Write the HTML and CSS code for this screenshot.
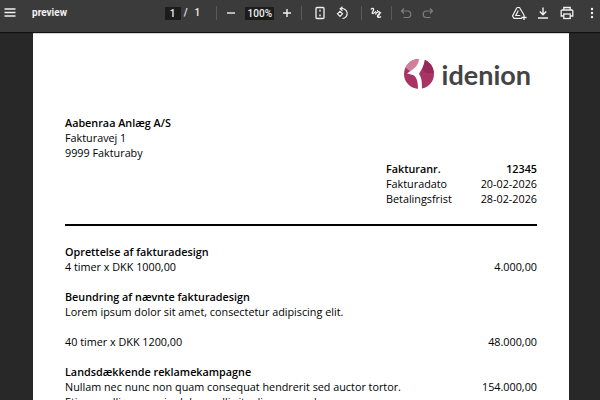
FILE: index.html
```html
<!DOCTYPE html>
<html lang="da">
<head>
<meta charset="utf-8">
<title>preview</title>
<link rel="stylesheet" href="styles.css">
</head>
<body>
<header class="toolbar">
  <div class="tb-left">
    <svg class="ic" viewBox="0 0 14 14"><path d="M1.5 3h11M1.5 6.500h11M1.500 10h11" stroke="#f1f1f1" stroke-width="1.300" fill="none"/></svg>
    <span class="title">preview</span>
  </div>
  <div class="tb-center">
    <span class="pagebox">1</span><span class="slash">/</span><span class="count">1</span>
    <i class="sep s1"></i>
    <svg class="ic z-minus" viewBox="0 0 14 14"><path d="M3 7h8" stroke="#f1f1f1" stroke-width="1.400"/></svg>
    <span class="zoombox">100%</span>
    <svg class="ic z-plus" viewBox="0 0 14 14"><path d="M3 7h8M7 3v8" stroke="#f1f1f1" stroke-width="1.400"/></svg>
    <i class="sep s2"></i>
    <svg class="ic fit" viewBox="0 0 14 14"><rect x="3" y="1.500" width="8" height="11" rx="1" stroke="#f1f1f1" stroke-width="1.300" fill="none"/><path d="M7 3.800v1.600M7 8.600v1.600" stroke="#f1f1f1" stroke-width="1.400"/></svg>
    <svg class="ic rot" viewBox="0 0 14 14"><path d="M4.500 2.800a5 5 0 1 1 2 9.700" stroke="#f1f1f1" stroke-width="1.200" fill="none"/><path d="M6.500 0.800L4.200 2.800 6.500 4.800" stroke="#f1f1f1" stroke-width="1.200" fill="none"/><path d="M4 5.300L1.500 7.800 4 10.300 6.500 7.800Z" stroke="#f1f1f1" stroke-width="1.200" fill="none"/></svg>
    <i class="sep s3"></i>
    <svg class="ic draw" viewBox="0 0 14 14"><path d="M2 3.500c1-1.800 3-1.300 2.500.5S2.500 7 3.500 7.500 6 6 7 5.500M6.500 8.500c.5-2 3-3.500 4-2.500s-1.500 2.500-2 4 2 2 3.500.5" stroke="#f1f1f1" stroke-width="1.300" fill="none"/><path d="M8 4l3 3M9 11l3-5" stroke="#f1f1f1" stroke-width="1"/></svg>
    <i class="sep s4"></i>
    <svg class="ic undo" viewBox="0 0 14 14"><path d="M5 2.500L2.500 5 5 7.500M2.800 5H8.500a3 3 0 0 1 0 6.500H4.500" stroke="#7f7f7f" stroke-width="1.200" fill="none"/></svg>
    <svg class="ic redo" viewBox="0 0 14 14"><path d="M9 2.500L11.500 5 9 7.500M11.200 5H5.500a3 3 0 0 0 0 6.500H9.500" stroke="#7f7f7f" stroke-width="1.200" fill="none"/></svg>
  </div>
  <div class="tb-right">
    <svg class="ic save" viewBox="0 0 16 14"><path d="M6 1.500h2.500l4.500 7.500M11 12.300H3l-1.500-2.300L6 1.500" stroke="#f1f1f1" stroke-width="1.200" fill="none"/><path d="M7.300 4.500L4.800 9.500h4.500" stroke="#f1f1f1" stroke-width="1.200" fill="none"/><path d="M13 9v5M10.500 11.500h5" stroke="#f1f1f1" stroke-width="1.300"/></svg>
    <svg class="ic dl" viewBox="0 0 14 14"><path d="M7 1.500v7M3.800 5.500L7 8.700l3.200-3.200M2 12h10" stroke="#f1f1f1" stroke-width="1.400" fill="none"/></svg>
    <svg class="ic pr" viewBox="0 0 14 14"><path d="M3.800 4V1.500h6.400V4M3.800 10H1.200V5a1 1 0 0 1 1-1h9.600a1 1 0 0 1 1 1v5h-2.600" stroke="#f1f1f1" stroke-width="1.300" fill="none"/><rect x="3.800" y="8" width="6.400" height="4.500" stroke="#f1f1f1" stroke-width="1.300" fill="none"/></svg>
    <svg class="ic more" viewBox="0 0 14 14"><circle cx="7" cy="3" r="1.200" fill="#f1f1f1"/><circle cx="7" cy="7" r="1.200" fill="#f1f1f1"/><circle cx="7" cy="11" r="1.200" fill="#f1f1f1"/></svg>
  </div>
</header>
<main class="viewer">
  <article class="sheet">
    <div class="logo">
      <svg class="mark" viewBox="0 0 30 30">
        <circle cx="15" cy="15" r="15" fill="#a83463"/>
        <path d="M15 0A15 15 0 0 0 1.500 8.500L8 14 15 8Z" fill="#d27f9e"/>
        <path d="M19 0A15 15 0 0 1 30 14L22 14 17 9Z" fill="#96295a"/>
        <path d="M15 -1C15 5 12 8 8 11L3 14.500 9 16C13 18 14 23 14 31H18C18 24 18 19 15 15 17 11 20 8 21 -1Z" fill="#fff"/>
      </svg>
      <span class="wordmark">idenion</span>
    </div>
    <section class="addr">
      <div class="b">Aabenraa Anlæg A/S</div>
      <div>Fakturavej 1</div>
      <div>9999 Fakturaby</div>
    </section>
    <section class="meta">
      <div class="row b"><span>Fakturanr.</span><span>12345</span></div>
      <div class="row"><span>Fakturadato</span><span>20-02-2026</span></div>
      <div class="row"><span>Betalingsfrist</span><span>28-02-2026</span></div>
    </section>
    <hr class="rule">
    <section class="line">
      <div class="b">Oprettelse af fakturadesign</div>
      <div class="row"><span>4 timer x DKK 1000,00</span><span>4.000,00</span></div>
    </section>
    <section class="line">
      <div class="b">Beundring af nævnte fakturadesign</div>
      <div>Lorem ipsum dolor sit amet, consectetur adipiscing elit.</div>
      <div class="row spaced"><span>40 timer x DKK 1200,00</span><span>48.000,00</span></div>
    </section>
    <section class="line">
      <div class="b">Landsdækkende reklamekampagne</div>
      <div class="row"><span>Nullam nec nunc non quam consequat hendrerit sed auctor tortor.</span><span>154.000,00</span></div>
      <div>Etiam mollis massa in dolor mollis ita diam purus lacus ornare eu.</div>
    </section>
  </article>
</main>
</body>
</html>
```
FILE: styles.css
```css
* { box-sizing: border-box; }
html, body { margin: 0; height: 100%; }
body { width: 600px; height: 400px; overflow: hidden; background: #282828; font-family: "Open Sans", sans-serif; display: flex; flex-direction: column; }
.toolbar { height: 32px; flex: none; background: #3b3b3b; display: grid; grid-template-columns: 1fr auto 1fr; align-items: start; padding-top: 6px; color: #f1f1f1; box-shadow: 0 1px 1px #111; position: relative; }
.tb-left, .tb-center, .tb-right { display: flex; align-items: center; height: 14px; }
.ic { width: 14px; height: 14px; flex: none; display: block; }
.tb-left { padding-left: 3px; }
.title { margin-left: 15px; font: 700 10px/14px Roboto, sans-serif; }
.pagebox { width: 16px; height: 13px; background: #1c1c1c; font: 500 10px/13px Roboto, sans-serif; text-align: center; }
.slash { margin-left: 3px; font: 500 10px/14px Roboto, sans-serif; }
.count { margin-left: 7px; font: 500 10px/14px Roboto, sans-serif; }
.sep { width: 1px; height: 14px; background: #5a5a5a; flex: none; }
.s1 { margin-left: 16px; }
.z-minus { margin-left: 7px; }
.zoombox { margin-left: 7px; width: 29px; height: 13px; background: #1c1c1c; font: 500 10px/13px Roboto, sans-serif; text-align: center; }
.z-plus { margin-left: 6px; }
.s2 { margin-left: 7px; }
.fit { margin-left: 11px; }
.rot { margin-left: 9px; }
.s3 { margin-left: 11px; }
.draw { margin-left: 7px; }
.s4 { margin-left: 8px; }
.undo { margin-left: 7px; }
.redo { margin-left: 8px; }
.tb-right { justify-content: flex-end; padding-right: 1px; }
.save { width: 16px; }
.dl { margin-left: 9px; }
.pr { margin-left: 10px; }
.more { margin-left: 11px; }
.viewer { flex: 1; min-height: 0; padding: 1px 31px 0 33px; overflow: hidden; }
.sheet { background: #fff; height: 400px; padding: 26px 32px 0; color: #000; font-size: 10.8px; line-height: 15px; }
.logo { display: flex; justify-content: flex-end; align-items: center; gap: 8px; height: 30px; margin-right: 6px; }
.mark { width: 30px; height: 30px; flex: none; }
.wordmark { font: 700 27px/30px Lato, sans-serif; color: #444; margin-top: 2px; }
.addr { margin-top: 26px; }
.b { font-weight: 600; }
.meta { margin: 1px 0 0 321px; }
.row { display: flex; justify-content: space-between; }
.rule { margin: 18px 0 0; border: 0; height: 2px; background: #000; }
.line { margin-top: 15px; }
.rule + .line { margin-top: 18px; }
.spaced { margin-top: 15px; }
```
